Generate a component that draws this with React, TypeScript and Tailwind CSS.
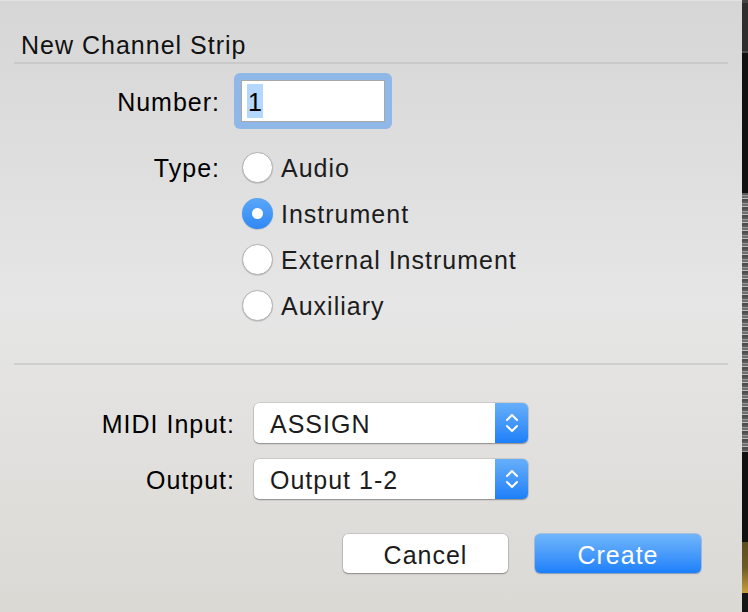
const font = { fontFamily: '"Liberation Sans", Arial, sans-serif' }

function Radio({ label, checked }: { label: string; checked?: boolean }) {
  return (
    <div className="flex h-[46px] items-center">
      {checked ? (
        <span className="flex h-[31px] w-[31px] items-center justify-center rounded-full bg-gradient-to-b from-[#5aa7f8] to-[#2f88f5] shadow-[0_0.5px_1px_rgba(0,0,0,0.25)]">
          <span className="h-[11px] w-[11px] rounded-full bg-white" />
        </span>
      ) : (
        <span className="h-[31px] w-[31px] rounded-full border border-[#b3b3b3] bg-white shadow-[0_0.5px_1px_rgba(0,0,0,0.2)]" />
      )}
      <span className="ml-[8px] pt-[3px] text-[#1c1c1c]">{label}</span>
    </div>
  )
}

function Select({ value }: { value: string }) {
  return (
    <div className="flex h-[40px] w-[274px] overflow-hidden rounded-[5px] bg-white shadow-[0_0_0_0.5px_rgba(0,0,0,0.18),0_1px_1.5px_rgba(0,0,0,0.3)]">
      <div className="flex flex-1 items-center pl-[16px] pt-[3px] text-[#1c1c1c]">{value}</div>
      <div className="flex w-[33px] items-center justify-center bg-gradient-to-b from-[#66aff9] to-[#1b7ff8]">
        <svg width="14" height="22" viewBox="0 0 14 22" fill="none" stroke="white" strokeWidth="2" strokeLinecap="round" strokeLinejoin="round">
          <path d="M2 8 L7 3 L12 8" />
          <path d="M2 14 L7 19 L12 14" />
        </svg>
      </div>
    </div>
  )
}

export default function App() {
  return (
    <div className="flex h-[612px] w-[748px] overflow-hidden" style={font}>
      <div className="flex w-[742px] flex-col bg-gradient-to-b from-[#d6d6d6] via-[#e6e6e6] to-[#dbd9d4] text-[25px] leading-[29px] tracking-[0.04em] text-black">
        <div className="h-[1px] bg-[#e2e2e2]" />
        {/* title */}
        <div className="pl-[21px] pt-[30px] text-[#111]">New Channel Strip</div>
        <div className="mx-[14px] mt-[2px] h-[2px] bg-[#c9c9c9]" />

        {/* number */}
        <div className="mt-[9px] flex items-center">
          <div className="w-[220px] pt-[3px] text-right">Number:</div>
          <div className="ml-[14px] rounded-[6px] bg-[#8fb8e9] p-[7px]">
            <div className="flex h-[42px] w-[144px] items-center border border-[#a8a8a8] bg-white pl-[5px]">
              <span className="inline-block h-[34px] w-[16px] bg-[#b4d7fe] pl-[1px] leading-[37px] tracking-normal">1</span>
            </div>
          </div>
        </div>

        {/* type */}
        <div className="mt-[15px] flex">
          <div className="flex h-[46px] w-[220px] items-center justify-end pt-[3px]">Type:</div>
          <div className="ml-[22px] flex flex-col">
            <Radio label="Audio" />
            <Radio label="Instrument" checked />
            <Radio label="External Instrument" />
            <Radio label="Auxiliary" />
          </div>
        </div>

        <div className="mx-[14px] mt-[35px] h-[2px] bg-[#cfcfcf]" />

        {/* routing */}
        <div className="mt-[38px] flex items-center">
          <div className="w-[235px] pt-[3px] text-right">MIDI Input:</div>
          <div className="ml-[19px]">
            <Select value="ASSIGN" />
          </div>
        </div>
        <div className="mt-[16px] flex items-center">
          <div className="w-[235px] pt-[3px] text-right">Output:</div>
          <div className="ml-[19px]">
            <Select value="Output 1-2" />
          </div>
        </div>

        {/* buttons */}
        <div className="mt-[35px] flex justify-end gap-[27px] pr-[41px]">
          <button className="h-[39px] w-[165px] rounded-[5px] bg-white pt-[3px] text-[#1c1c1c] shadow-[0_0_0_0.5px_rgba(0,0,0,0.2),0_1px_1.5px_rgba(0,0,0,0.3)]">
            Cancel
          </button>
          <button className="h-[39px] w-[166px] rounded-[5px] bg-gradient-to-b from-[#6fb5fa] to-[#1a80fb] pt-[3px] text-white shadow-[0_0_0_0.5px_rgba(20,100,220,0.5),0_1px_1.5px_rgba(0,0,0,0.2)]">
            Create
          </button>
        </div>
      </div>

      {/* window behind */}
      <div className="flex w-[6px] flex-col">
        <div className="h-[3px] bg-[#444]" />
        <div className="h-[48px] bg-[#2e2e2e]" />
        <div className="h-[2px] bg-[#4a4a4a]" />
        <div className="h-[140px] bg-[#111]" />
        <div className="h-[259px] bg-[repeating-linear-gradient(180deg,#5a5a5a_0px,#5a5a5a_2px,#9a9a9a_2px,#9a9a9a_3px,#6e6e6e_3px,#6e6e6e_5px,#bdbdbd_5px,#bdbdbd_6px,#4d4d4d_6px,#4d4d4d_8px)]" />
        <div className="h-[90px] bg-[#111]" />
        <div className="h-[51px] bg-gradient-to-b from-[#5a4c22] via-[#6e5a27] to-[#c7a23a]" />
        <div className="flex-1 bg-[#151515]" />
      </div>
    </div>
  )
}
